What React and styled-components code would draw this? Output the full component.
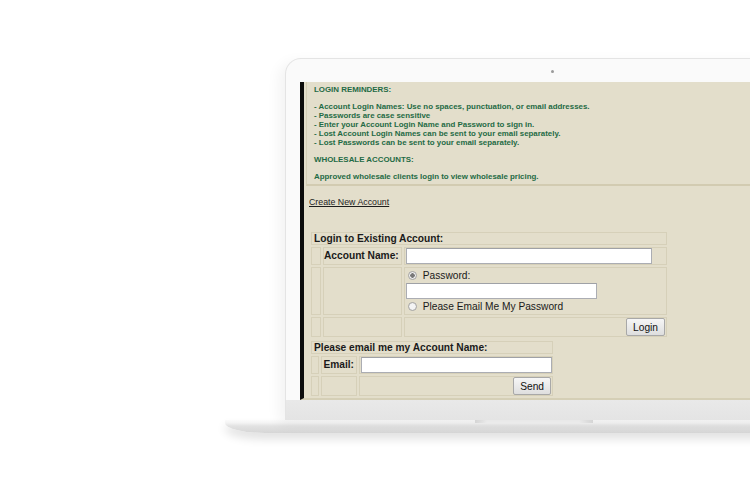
import React from 'react'
import styled, {createGlobalStyle} from 'styled-components'

const Global = createGlobalStyle`
  html, body {
    margin: 0;
    background: #fff;
    overflow: hidden;
  }
`

const Stage = styled.div`
  width: 750px;
  height: 500px;
  overflow: hidden;
  padding: 58px 0 0 285px;
  box-sizing: border-box;
  display: flex;
  flex-direction: column;
`

const Lid = styled.div`
  width: 520px;
  height: 362px;
  box-sizing: border-box;
  border: 1px solid #e4e4e4;
  border-bottom: none;
  border-radius: 16px 16px 0 0;
  background: #fafafa;
  box-shadow: -6px 4px 14px rgba(0,0,0,0.05);
  padding: 23px 0 0 14px;
  display: flex;
  flex-direction: column;
  position: relative;
`

const Camera = styled.span`
  position: absolute;
  top: 11px;
  left: 265px;
  width: 3px;
  height: 3px;
  border-radius: 50%;
  background: #9a9a9a;
`

const Screen = styled.div`
  height: 318px;
  overflow: hidden;
  background: #e3decb;
  border-left: 4px solid #0c0c0c;
  border-bottom: 2px solid #d5cfb6;
  box-sizing: border-box;
  display: flex;
  flex-direction: column;
  font-family: "Liberation Sans", Arial, sans-serif;
`

const Chin = styled.div`
  flex: 1;
  margin-left: -14px;
  background: linear-gradient(#e9e9e9, #e4e4e4);
`

const Base = styled.div`
  margin-left: -60px;
  width: 600px;
  height: 13px;
  background: linear-gradient(#fbfbfb 0, #f3f3f3 3px, #e2e2e2 6px, #d6d6d6 100%);
  border-radius: 0 0 0 40px / 0 0 0 10px;
  box-shadow: 0 6px 10px rgba(0,0,0,0.12);
  display: flex;
  padding-left: 250px;
  box-sizing: border-box;
`

const Notch = styled.span`
  width: 118px;
  height: 3px;
  background: linear-gradient(90deg, #dcdcdc 0, #f2f2f2 12px, #f2f2f2 104px, #dcdcdc 100%);
`

const Reminders = styled.div`
  margin-left: 2px;
  padding: 3px 7px 3px;
  border-left: 1px solid #d4ceb6;
  border-bottom: 2px solid #d2cbb1;
  color: #1f6b45;
  font-size: 7.9px;
  font-weight: bold;
  line-height: 9px;
  white-space: nowrap;
  p {
    margin: 0 0 8px;
  }
  p:last-child {
    margin: 0;
  }
`

const CreateLink = styled.a`
  margin: 12px 0 0 5px;
  color: #1d1d1d;
  font-size: 8.8px;
  line-height: 9px;
  text-decoration: underline;
  align-self: flex-start;
`

const Table = styled.table`
  border-collapse: separate;
  border-spacing: 2px;
  margin-left: 5px;
  font-size: 10.2px;
  color: #1a1a1a;
  width: ${p => p.$w}px;
  flex-shrink: 0;
  td {
    box-sizing: border-box;
    border: 1px solid #d6d0b9;
    padding: 0;
    line-height: 12px;
    white-space: nowrap;
  }
`

const LoginTable = styled(Table)`
  margin-top: 23px;
`

const Header = styled.td`
  font-weight: bold;
  line-height: 11px !important;
  padding: 0 2px !important;
`

const Label = styled.td`
  font-weight: bold;
  text-align: right;
  padding-right: 2px !important;
  width: ${p => p.$w}px;
`

const Gutter = styled.td`
  width: 10px;
`

const Field = styled.input`
  width: ${p => p.$w}px;
  height: 16px;
  box-sizing: border-box;
  border: 1px solid #abadb3;
  border-top-color: #9fa1a6;
  background: #fff;
  margin: 0 0 0 1px;
  padding: 0;
  display: block;
`

const Choice = styled.label`
  display: flex;
  align-items: center;
  gap: 6px;
  height: 15px;
  margin-left: 3px;
`

const Radio = styled.span`
  width: 9px;
  height: 9px;
  border-radius: 50%;
  border: 1px solid #a5a5a5;
  background: radial-gradient(circle, ${p => p.$on ? '#7a7a7a 0 2px' : '#f4f4f4 0 2px'}, #f4f4f4 2.5px, #dcdcdc);
  box-sizing: border-box;
`

const ButtonCell = styled.td`
  text-align: right;
`

const Button = styled.button`
  font-family: "Liberation Sans", Arial, sans-serif;
  font-size: 10.2px;
  color: #111;
  height: 18px;
  padding: 0 6px;
  margin: 0 1px 0 0;
  display: inline-block;
  vertical-align: top;
  border: 1px solid #a8a8a8;
  border-radius: 2px;
  background: linear-gradient(#f6f6f6, #dedede);
`

export default function App() {
  return (
    <Stage>
      <Global />
      <Lid>
        <Camera />
        <Screen>
          <Reminders>
            <p>LOGIN REMINDERS:</p>
            <p>
              - Account Login Names: Use no spaces, punctuation, or email addresses.<br />
              - Passwords are case sensitive<br />
              - Enter your Account Login Name and Password to sign in.<br />
              - Lost Account Login Names can be sent to your email separately.<br />
              - Lost Passwords can be sent to your email separately.
            </p>
            <p>WHOLESALE ACCOUNTS:</p>
            <p>Approved wholesale clients login to view wholesale pricing.</p>
          </Reminders>
          <CreateLink href="#">Create New Account</CreateLink>
          <LoginTable $w={360}>
            <tbody>
              <tr><Header colSpan={3}>Login to Existing Account:</Header></tr>
              <tr>
                <Gutter />
                <Label $w={75}>Account Name:</Label>
                <td><Field $w={246} /></td>
              </tr>
              <tr>
                <Gutter />
                <td />
                <td>
                  <Choice><Radio $on />Password:</Choice>
                  <Field $w={191} />
                  <Choice><Radio />Please Email Me My Password</Choice>
                </td>
              </tr>
              <tr>
                <Gutter />
                <td />
                <ButtonCell><Button>Login</Button></ButtonCell>
              </tr>
            </tbody>
          </LoginTable>
          <Table $w={246}>
            <tbody>
              <tr><Header colSpan={3}>Please email me my Account Name:</Header></tr>
              <tr>
                <Gutter />
                <Label $w={37}>Email:</Label>
                <td><Field $w={191} /></td>
              </tr>
              <tr>
                <Gutter />
                <td />
                <ButtonCell><Button>Send</Button></ButtonCell>
              </tr>
            </tbody>
          </Table>
        </Screen>
        <Chin />
      </Lid>
      <Base><Notch /></Base>
    </Stage>
  )
}
